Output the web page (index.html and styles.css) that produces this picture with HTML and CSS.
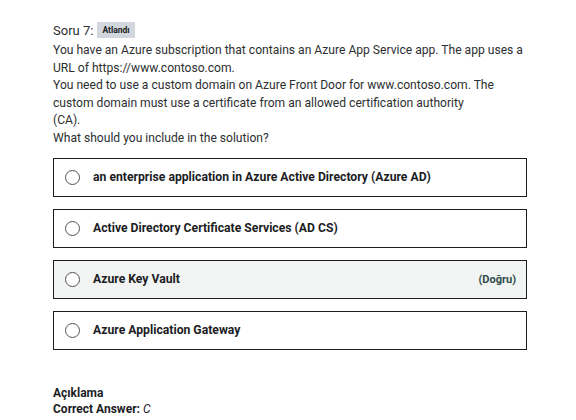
FILE: index.html
```html
<!DOCTYPE html>
<html>
<head>
<meta charset="utf-8">
<link rel="stylesheet" href="styles.css">
</head>
<body>
<div class="page">
  <div class="head">
    <span class="qnum">Soru 7:</span>
    <span class="badge">Atlandı</span>
  </div>
  <div class="question">
    <p>You have an Azure subscription that contains an Azure App Service app. The app uses a<br>URL of https://www.contoso.com.</p>
    <p>You need to use a custom domain on Azure Front Door for www.contoso.com. The<br>custom domain must use a certificate from an allowed certification authority<br>(CA).</p>
    <p>What should you include in the solution?</p>
  </div>
  <ul class="options">
    <li class="option"><span class="radio"></span><span class="label">an enterprise application in Azure Active Directory (Azure AD)</span></li>
    <li class="option"><span class="radio"></span><span class="label">Active Directory Certificate Services (AD CS)</span></li>
    <li class="option correct"><span class="radio"></span><span class="label">Azure Key Vault</span><span class="mark">(Doğru)</span></li>
    <li class="option"><span class="radio"></span><span class="label">Azure Application Gateway</span></li>
  </ul>
  <div class="explain">
    <div class="title">Açıklama</div>
    <div class="answer">Correct Answer: <em>C</em></div>
  </div>
</div>
</body>
</html>
```
FILE: styles.css
```css
html, body {
  margin: 0;
  padding: 0;
  background: #ffffff;
}
body {
  font-family: Roboto, "Liberation Sans", sans-serif;
  color: #1c1d1f;
}
.page {
  padding: 21px 40px 0 53px;
}
.head {
  display: flex;
  align-items: center;
  gap: 4px;
  height: 18px;
}
.qnum {
  font-size: 13px;
  color: #2d2f31;
}
.badge {
  background: #d1d7dc;
  font-size: 8.5px;
  font-weight: 700;
  padding: 3px 5px;
  line-height: 10px;
}
.question {
  margin-top: 3px;
  font-size: 12.1px;
  line-height: 17.6px;
  color: #2d2f31;
  white-space: nowrap;
}
.question p {
  margin: 0;
}
.options {
  list-style: none;
  margin: 10px 0 0 0;
  padding: 0;
  width: 474px;
  display: flex;
  flex-direction: column;
  gap: 12px;
}
.option {
  display: flex;
  align-items: center;
  height: 37px;
  border: 1px solid #1c1d1f;
  padding: 0 10px 0 11px;
  background: #fff;
}
.option.correct {
  background: #f1f4f3;
}
.radio {
  width: 15px;
  height: 15px;
  border: 1px solid #505356;
  border-radius: 50%;
  box-sizing: border-box;
  flex: none;
  background: #fff;
}
.label {
  margin-left: 13px;
  font-size: 12.2px;
  font-weight: 700;
  flex: 1;
}
.mark {
  font-size: 11px;
  font-weight: 700;
  color: #2f4b4a;
}
.explain {
  margin-top: 35px;
  font-size: 12px;
  line-height: 16px;
  font-weight: 700;
}
.answer em {
  font-weight: 400;
}
```
